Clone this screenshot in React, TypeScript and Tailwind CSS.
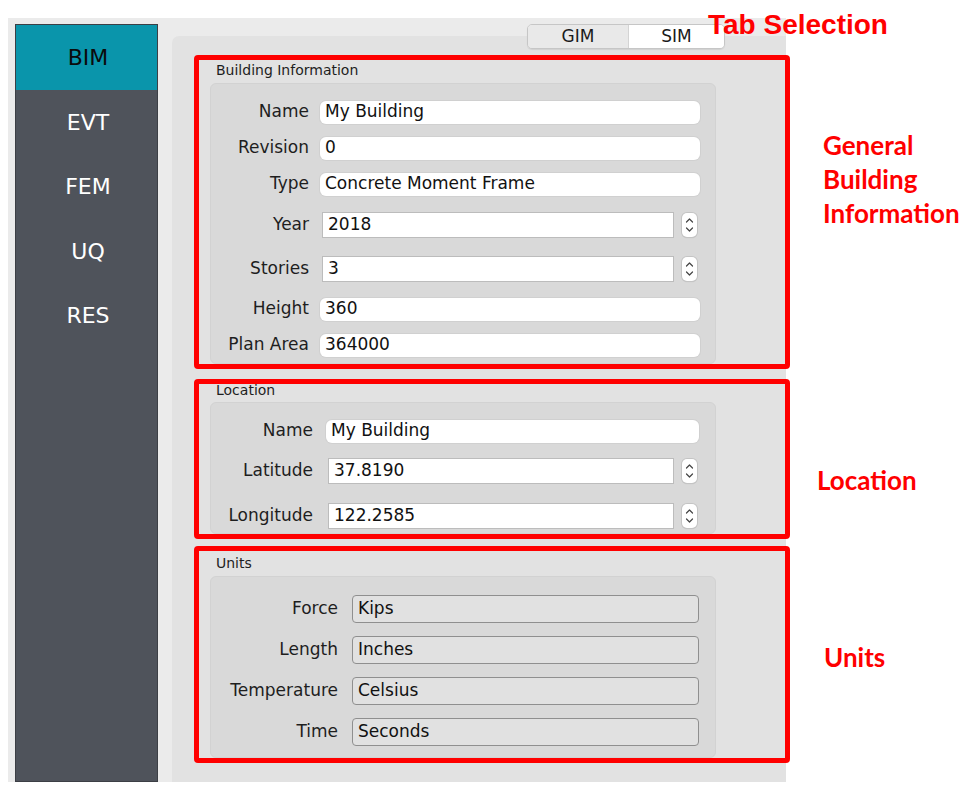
import clsx from "clsx";

const cn = clsx;

type Row = { label: string; value: string; kind: "line" | "spin"; mt: string };

const buildingRows: Row[] = [
  { label: "Name", value: "My Building", kind: "line", mt: "mt-[14px]" },
  { label: "Revision", value: "0", kind: "line", mt: "mt-[8px]" },
  { label: "Type", value: "Concrete Moment Frame", kind: "line", mt: "mt-[8px]" },
  { label: "Year", value: "2018", kind: "spin", mt: "mt-[13px]" },
  { label: "Stories", value: "3", kind: "spin", mt: "mt-[16px]" },
  { label: "Height", value: "360", kind: "line", mt: "mt-[12px]" },
  { label: "Plan Area", value: "364000", kind: "line", mt: "mt-[8px]" },
];

const locationRows: Row[] = [
  { label: "Name", value: "My Building", kind: "line", mt: "mt-[14px]" },
  { label: "Latitude", value: "37.8190", kind: "spin", mt: "mt-[12px]" },
  { label: "Longitude", value: "122.2585", kind: "spin", mt: "mt-[17px]" },
];

const unitRows = [
  { label: "Force", value: "Kips", mt: "mt-[18px]" },
  { label: "Length", value: "Inches", mt: "mt-[13px]" },
  { label: "Temperature", value: "Celsius", mt: "mt-[13px]" },
  { label: "Time", value: "Seconds", mt: "mt-[13px]" },
];

const navItems = ["BIM", "EVT", "FEM", "UQ", "RES"];

function SpinArrows() {
  return (
    <div className="flex h-[24px] w-[15px] items-center justify-center rounded-[5px] bg-white shadow-[0_0_0_1px_#c4c4c4,0_1px_1px_rgba(0,0,0,.15)]">
      <svg width="9" height="16" viewBox="0 0 9 16" fill="none" stroke="#444" strokeWidth="1.2" strokeLinecap="round" strokeLinejoin="round">
        <path d="M1.5 5 L4.5 2 L7.5 5" />
        <path d="M1.5 11 L4.5 14 L7.5 11" />
      </svg>
    </div>
  );
}

function Field({ row, labelW, lineW, spinW, gap }: { row: Row; labelW: string; lineW: string; spinW: string; gap: string }) {
  return (
    <div className={cn("flex h-[28px] items-center", row.mt)}>
      <div className={cn("shrink-0 text-right text-[#1e1e1e]", labelW)}>{row.label}</div>
      <div className={cn("flex items-center", gap)}>
        {row.kind === "line" ? (
          <div className={cn("flex h-[23px] items-center rounded-[6px] bg-white pl-[5px] text-[#111] shadow-[0_0_0_1px_#d0d0d0]", lineW)}>{row.value}</div>
        ) : (
          <div className="ml-[2px] flex items-center gap-[8px]">
            <div className={cn("flex h-[26px] items-center border border-[#bcbcbc] bg-white pl-[5px] text-[#111]", spinW)}>{row.value}</div>
            <SpinArrows />
          </div>
        )}
      </div>
    </div>
  );
}

function Annotation({ children, className }: { children: React.ReactNode; className: string }) {
  return (
    <div className={cn("absolute whitespace-nowrap text-[26px] font-bold leading-[34px] text-[#ff0000]", className)} style={{ fontFamily: "Lato, 'Noto Sans', sans-serif" }}>
      {children}
    </div>
  );
}

export default function App() {
  return (
    <div className="relative h-[791px] w-[972px] overflow-hidden bg-white pl-[8px] pt-[18px] text-[17px]" style={{ fontFamily: "'DejaVu Sans', Verdana, sans-serif" }}>
      <div className="flex h-[764px] w-[778px] bg-[#ebebeb] pl-[7px] pt-[6px]">
        <div className="flex h-[758px] w-[143px] shrink-0 flex-col border border-[#3c3f45] bg-[#4f535b]">
          {navItems.map((item, i) => (
            <div
              key={item}
              className={cn(
                "flex items-center justify-center pl-[3px] text-[22px]",
                i === 0 ? "h-[65px] bg-[#0a95ab] text-[#0b0b0b]" : "h-[64.5px] text-white"
              )}
            >
              {item}
            </div>
          ))}
        </div>

        <div className="relative ml-[14px] mt-[12px] h-[746px] w-[614px] rounded-tl-[7px] bg-[#e2e2e2] pl-[22px] pt-[19px]">
          <div className="absolute left-[355px] top-[-12px] flex h-[25px] w-[198px] overflow-hidden rounded-[5px] border border-[#c6c6c6] text-[17px] text-[#1a1a1a] shadow-[0_1px_1px_rgba(0,0,0,.08)]">
            <div className="flex w-[101px] items-center justify-center border-r border-[#d4d4d4] bg-[#e9e9e9]">GIM</div>
            <div className="flex flex-1 items-center justify-center bg-white">SIM</div>
          </div>

          <section className="relative h-[314px] w-[596px] rounded-[4px] border-[5px] border-[#ff0000]">
            <div className="h-[23px] pl-[17px] pt-[4px] text-[14px] leading-[13px] text-[#1e1e1e]">Building Information</div>
            <div className="ml-[11px] flex h-[281px] w-[506px] flex-col rounded-[6px] border border-[#d2d2d2] bg-[#d9d9d9]">
              {buildingRows.map((row) => (
                <Field key={row.label} row={row} labelW="w-[98px]" gap="ml-[11px]" lineW="w-[380px]" spinW="w-[352px]" />
              ))}
            </div>
            <Annotation className="left-[calc(100%+38px)] top-[68px]">
              General
              <br />
              Building
              <br />
              Information
            </Annotation>
          </section>

          <section className="relative mt-[10px] h-[160px] w-[596px] rounded-[4px] border-[5px] border-[#ff0000]">
            <div className="h-[18px] pl-[17px] text-[14px] leading-[13px] text-[#1e1e1e]">Location</div>
            <div className="ml-[11px] flex h-[132px] w-[506px] flex-col rounded-[6px] border border-[#d2d2d2] bg-[#d9d9d9]">
              {locationRows.map((row) => (
                <Field key={row.label} row={row} labelW="w-[102px]" gap="ml-[13px]" lineW="w-[373px]" spinW="w-[346px]" />
              ))}
            </div>
            <Annotation className="left-[calc(100%+32px)] top-[79px]">Location</Annotation>
          </section>

          <section className="relative mt-[7px] h-[217px] w-[596px] rounded-[4px] border-[5px] border-[#ff0000]">
            <div className="h-[25px] pl-[17px] pt-[6px] text-[14px] leading-[13px] text-[#1e1e1e]">Units</div>
            <div className="ml-[11px] flex h-[182px] w-[506px] flex-col rounded-[6px] border border-[#d2d2d2] bg-[#d9d9d9]">
              {unitRows.map((row) => (
                <div key={row.label} className={cn("flex h-[28px] items-center", row.mt)}>
                  <div className="w-[127px] shrink-0 text-right text-[#1e1e1e]">{row.label}</div>
                  <div className="ml-[14px] flex h-[28px] w-[347px] items-center rounded-[4px] border border-[#8f8f8f] bg-[#e1e1e1] pl-[5px] text-[#111]">
                    {row.value}
                  </div>
                </div>
              ))}
            </div>
            <Annotation className="left-[calc(100%+39px)] top-[89px]">Units</Annotation>
          </section>
        </div>
      </div>

      <div className="absolute left-[708px] top-[11px] whitespace-nowrap text-[28px] font-bold leading-[28px] text-[#ff0000]" style={{ fontFamily: "'Liberation Sans', Arial, sans-serif" }}>
        Tab Selection
      </div>
    </div>
  );
}
